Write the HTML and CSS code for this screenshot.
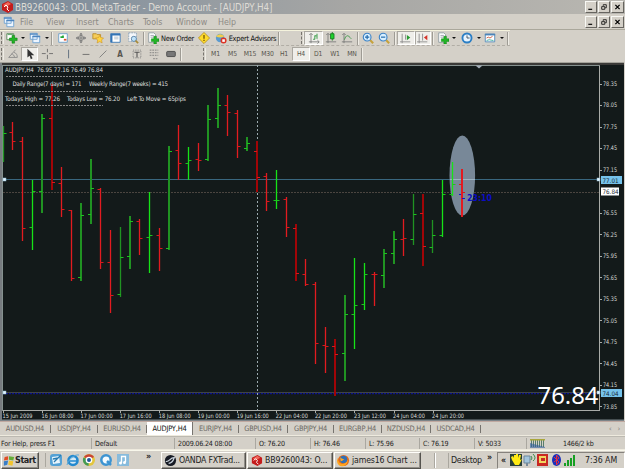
FILE: index.html
```html
<!DOCTYPE html>
<html lang="en">
<head>
<meta charset="utf-8">
<title>ODL MetaTrader</title>
<link rel="stylesheet" href="styles.css">
</head>
<body>
<svg class="defs" width="0" height="0">
  <symbol id="logo" viewBox="0 0 14 14"><path d="M2 4 8 1l5 3v6l-5 3-6-3z" fill="#c41c1c"/><path d="M3 5 8 2l3 2-5 3z" fill="#f0685c"/><path d="m4 7 2-2 2 2-1 2 2 2" stroke="#fff" fill="none"/></symbol>
  <symbol id="newchart" viewBox="0 0 14 14"><path d="M1 2h8v7H1z" fill="#fff" stroke="#518451"/><path d="M2 3h6" stroke="#4c9c58"/><path d="M7 4h3v3h3v3h-3v3H7v-3H4V7h3z" fill="#22b526" stroke="#08780d" stroke-width=".6"/></symbol>
  <symbol id="windows" viewBox="0 0 14 14"><path d="M1.500 1.500h8v7h-8zM4.500 4.500h8v8h-8z" fill="#edf5ff" stroke="#6b9fd0"/><path d="M1 2.500h9M4 5.500h9" stroke="#4b83be" stroke-width="1.500"/></symbol>
  <symbol id="market" viewBox="0 0 14 14"><path d="M2 2h10v10H2z" fill="#fff" stroke="#669bc8"/><path d="M4 6h3v-2" stroke="#1fa535" stroke-width="2" fill="none"/><path d="M8 9h3" stroke="#df522c" stroke-width="2"/></symbol>
  <symbol id="cross" viewBox="0 0 14 14"><circle cx="7" cy="7" r="3" fill="none" stroke="#777"/><path d="M7 2v10M2 7h10" stroke="#777"/><path d="m7 1 2 2H5zm0 12 2-2H5zM1 7l2-2v4zm12 0-2-2v4z" fill="#777"/></symbol>
  <symbol id="star" viewBox="0 0 14 14"><path d="M1 2h4l1 1h4v5H1z" fill="#f6cd58" stroke="#b98a28"/><path d="m9 4 1.300 2.500 3.200.5-2.300 2.300.6 3.500L9 11.200l-3 1.600.6-3.500L4.300 7l3.300-.5z" fill="#ffd443" stroke="#c88b18" stroke-width=".6"/></symbol>
  <symbol id="terminal" viewBox="0 0 14 14"><path d="M2 2h11v10H2z" fill="#fff" stroke="#3274b5"/><path d="M3 2v10M2 3h11" stroke="#3274b5" stroke-width="2"/><path d="M6 6h5M6 8h5" stroke="#a6b8c4"/></symbol>
  <symbol id="tester" viewBox="0 0 14 14"><path d="M2 1h9v10H2z" fill="#f4f7fb" stroke="#8aa3b9" stroke-dasharray="2 1"/><circle cx="8" cy="8" r="3" fill="#bfe2fa" stroke="#547da2"/><path d="m10 10 3 3" stroke="#a88a38" stroke-width="2"/></symbol>
  <symbol id="order" viewBox="0 0 14 14"><path d="M2 1h6l2 2v9H2z" fill="#fff" stroke="#8b989e"/><path d="M4 4h4M4 6h4" stroke="#99a"/><path d="M8 5h3v3h3v3h-3v3H8v-3H5V8h3z" fill="#22b526" stroke="#08780d" stroke-width=".5"/></symbol>
  <symbol id="warn" viewBox="0 0 14 14"><path d="m7 .5 6.500 6.500L7 13.500.5 7z" fill="#ffdb2a" stroke="#b79121"/><path d="M7 3.500v4.500M7 9v1.500" stroke="#725500" stroke-width="1.500"/></symbol>
  <symbol id="expert" viewBox="0 0 14 14"><circle cx="6" cy="7" r="5" fill="#5b9bd0"/><path d="M1 5q5-5 10 0-5 3-10 0" fill="#f3cf4b"/><circle cx="10" cy="10" r="3.500" fill="#dc3324"/><path d="M8.500 8.500h3v3h-3z" fill="#fff"/></symbol>
  <symbol id="bars" viewBox="0 0 14 14"><path d="M3.500 2v11M1 11.500h12M1.500 3.500l2-2 2 2M11 9.500l2 2-2 2" stroke="#777" fill="none"/><path d="M6 8.500h2V4M8 4.500h2M10.500 2v6" stroke="#1d8f2d" fill="none"/></symbol>
  <symbol id="candle" viewBox="0 0 14 14"><path d="M3.500 2v11M1 11.500h12M1.500 3.500l2-2 2 2" stroke="#777" fill="none"/><path d="M8.500 0v10" stroke="#16791e"/><path d="M6.500 2h4v6h-4z" fill="#1fd42d" stroke="#16791e"/></symbol>
  <symbol id="line" viewBox="0 0 14 14"><path d="M3.500 2v11M1 11.500h12M1.500 3.500l2-2 2 2" stroke="#777" fill="none"/><path d="M4 9c2-6 4-6 8-1" stroke="#3c9646" fill="none"/></symbol>
  <symbol id="zin" viewBox="0 0 14 14"><path d="m8 8 5 5" stroke="#c6a23c" stroke-width="2.500"/><circle cx="6" cy="6" r="4.500" fill="#d8efff" stroke="#3c83c7" stroke-width="1.300"/><path d="M3.500 6h5M6 3.500v5" stroke="#246cad" stroke-width="1.400"/></symbol>
  <symbol id="zout" viewBox="0 0 14 14"><path d="m8 8 5 5" stroke="#c6a23c" stroke-width="2.500"/><circle cx="6" cy="6" r="4.500" fill="#d8efff" stroke="#3c83c7" stroke-width="1.300"/><path d="M3.500 6h5" stroke="#246cad" stroke-width="1.400"/></symbol>
  <symbol id="scroll" viewBox="0 0 14 14"><path d="M2.500 2v11M0 11.500h12M6.500 3v6" stroke="#888"/><path d="m8 3.500 4 3-4 3z" fill="#279b31"/></symbol>
  <symbol id="shift" viewBox="0 0 14 14"><path d="M2.500 2v11M0 11.500h12M6.500 2v8" stroke="#888"/><path d="m12 3.500-4 3 4 3z" fill="#d53328"/></symbol>
  <symbol id="clock" viewBox="0 0 14 14"><circle cx="7" cy="7" r="5.300" fill="#e7f4ff" stroke="#2c7fc5" stroke-width="2.200"/><path d="M7 4v3h3" stroke="#345" fill="none"/></symbol>
  <symbol id="template" viewBox="0 0 14 14"><path d="M1.500 2.500h11v9h-11z" fill="#fff" stroke="#4b84b8"/><path d="M1 3h12" stroke="#4b84b8" stroke-width="2"/><path d="m3 7 2-1 2 1 3-2" stroke="#c75232" fill="none"/><path d="m3 10 3-1 5 1" stroke="#3a9" fill="none"/></symbol>
  <symbol id="angle" viewBox="0 0 14 14"><path d="M2 11 10 2M2 11h10M5 7c3 0 3 2 4 4M8 5c3 1 4 3 4 6" stroke="#888" fill="none"/></symbol>
  <symbol id="pointer" viewBox="0 0 14 14"><path d="M4 1v10l2.500-2L8 13l2-1-1.700-3.500H12z" fill="#333"/></symbol>
  <symbol id="hair" viewBox="0 0 14 14"><path d="M7.500 1v4m0 3v5M1 6.500h4.500m4 0H14" stroke="#666"/></symbol>
  <symbol id="vline" viewBox="0 0 14 14"><path d="M6.500 2v10" stroke="#567"/></symbol>
  <symbol id="hline" viewBox="0 0 14 14"><path d="M3 7.500h8" stroke="#666"/></symbol>
  <symbol id="trend" viewBox="0 0 14 14"><path d="M3 11 11 3" stroke="#777"/></symbol>
  <symbol id="label" viewBox="0 0 14 14"><path d="M2.500 2.500h9v9h-9z" fill="none" stroke="#777" stroke-dasharray="1 1"/><path d="M4 5h6M7 5v6" stroke="#555" stroke-width="1.300"/></symbol>
  <symbol id="fibo" viewBox="0 0 14 14"><path d="M2 2.500h10M2 5.500h10M2 8.500h10M6 12.500h6" stroke="#777" stroke-dasharray="2 1"/></symbol>
  <symbol id="shape" viewBox="0 0 14 14"><rect x="2" y="4" width="10" height="6" rx="1" fill="#777" stroke="#444"/></symbol>
  <symbol id="ie" viewBox="0 0 14 14"><circle cx="7" cy="7.500" r="4.500" fill="#d4e9f6" stroke="#2389cf" stroke-width="2.600"/><path d="M4 8h7" stroke="#2389cf" stroke-width="1.500"/><path d="M1 12C2 7 8 1 13 2" fill="none" stroke="#5aa9da"/></symbol>
  <symbol id="desktop" viewBox="0 0 14 14"><rect x="1" y="1" width="12" height="12" rx="3" fill="#54a1d5"/><path d="m3 4 7-1 1 7-7 1z" fill="#e9f5fc"/><path d="m5 9 7-7M4 6l5-1" stroke="#287cb2" stroke-width="1.300"/></symbol>
  <symbol id="chrome" viewBox="0 0 14 14"><circle cx="7" cy="7" r="6" fill="#e3c63d"/><path d="M2 4a6 6 0 0 1 10 0L7 7z" fill="#c94436"/><path d="M1.500 4.500a6 6 0 0 0 5 8.500L7 7z" fill="#429956"/><circle cx="7" cy="7" r="3.300" fill="#fff"/><circle cx="7" cy="7" r="2" fill="#24579b"/></symbol>
  <symbol id="quick" viewBox="0 0 14 14"><circle cx="7" cy="7" r="4.700" fill="#f4fbff" stroke="#3d94d2" stroke-width="2.500"/><path d="m8 8 4 4" stroke="#3d94d2" stroke-width="2.500"/></symbol>
  <symbol id="music" viewBox="0 0 14 14"><rect x="1" y="1" width="12" height="12" fill="#87bbdc"/><path d="M5.500 10V3.500h4V9" stroke="#fff" stroke-width="1.300" fill="none"/><circle cx="4.500" cy="10" r="1.500" fill="#fff"/><circle cx="8.500" cy="9.500" r="1.500" fill="#fff"/></symbol>
  <symbol id="firefox" viewBox="0 0 14 14"><circle cx="7" cy="7" r="6" fill="#e76c18"/><circle cx="7" cy="6" r="4" fill="#326fb5"/><path d="M1 4c0 8 8 9 11 2-1 10-12 9-12 1zM3 2c0 3 3 3 5 4l-4 2z" fill="#ffa51f"/></symbol>
  <symbol id="oanda" viewBox="0 0 14 14"><circle cx="7" cy="7" r="6" fill="#171b24"/><path d="M2 8c4 1 4-4 9-4-1 3-3 6-6 6" stroke="#ccd5df" stroke-width="1.300" fill="none"/></symbol>
</svg>

<div class="app">
  <header class="title"><svg class="ico"><use href="#logo"/></svg><span class="title-text">BB9260043: ODL MetaTrader - Demo Account - [AUDJPY,H4]</span>
    <span class="controls"><svg viewBox="0 0 13 11"><path d="M3 8.500h5" stroke="#000" stroke-width="1.500"/></svg><svg viewBox="0 0 13 11"><path d="M5.500 4V2.500h4v4H8M3.500 5h4v3.500h-4z" fill="none" stroke="#000"/></svg><svg viewBox="0 0 13 11"><path d="m4 3 5 5m0-5L4 8" stroke="#000" stroke-width="1.500"/></svg></span>
  </header>
  <nav class="menu"><svg class="ico"><use href="#windows"/></svg><span>File</span><span>View</span><span>Insert</span><span>Charts</span><span>Tools</span><span>Window</span><span>Help</span>
    <span class="controls"><svg viewBox="0 0 13 11"><path d="M3 8.500h5" stroke="#000" stroke-width="1.500"/></svg><svg viewBox="0 0 13 11"><path d="M5.500 4V2.500h4v4H8M3.500 5h4v3.500h-4z" fill="none" stroke="#000"/></svg><svg viewBox="0 0 13 11"><path d="m4 3 5 5m0-5L4 8" stroke="#000" stroke-width="1.500"/></svg></span>
  </nav>
  <div class="tools main-tools">
    <i class="grip"></i><svg class="ico"><use href="#newchart"/></svg><b class="arrow"></b><svg class="ico"><use href="#windows"/></svg><b class="arrow"></b><i class="sep"></i>
    <svg class="ico"><use href="#market"/></svg><svg class="ico"><use href="#cross"/></svg><svg class="ico"><use href="#star"/></svg><svg class="ico"><use href="#terminal"/></svg><svg class="ico"><use href="#tester"/></svg><i class="sep"></i>
    <svg class="ico"><use href="#order"/></svg><span class="order">New Order</span><svg class="ico"><use href="#warn"/></svg><svg class="ico"><use href="#expert"/></svg><span class="expert">Expert Advisors</span><i class="sep"></i><i></i><i class="grip"></i>
    <span class="pressed"><svg class="ico"><use href="#bars"/></svg></span><svg class="ico"><use href="#candle"/></svg><svg class="ico"><use href="#line"/></svg><i class="sep"></i><svg class="ico"><use href="#zin"/></svg><svg class="ico"><use href="#zout"/></svg><i class="sep"></i>
    <span class="pressed"><svg class="ico"><use href="#scroll"/></svg></span><span class="pressed"><svg class="ico"><use href="#shift"/></svg></span><i class="sep"></i><svg class="ico"><use href="#order"/></svg><b class="arrow"></b><svg class="ico"><use href="#clock"/></svg><b class="arrow"></b><svg class="ico"><use href="#template"/></svg><b class="arrow"></b><i class="sep"></i>
  </div>
  <div class="tools draw-tools">
    <i class="grip"></i><svg class="ico"><use href="#angle"/></svg><span class="pressed"><svg class="ico"><use href="#pointer"/></svg></span><svg class="ico"><use href="#hair"/></svg><i></i><svg class="ico"><use href="#vline"/></svg><svg class="ico"><use href="#hline"/></svg><svg class="ico"><use href="#trend"/></svg><span class="letter">A</span><svg class="ico"><use href="#label"/></svg><svg class="ico"><use href="#fibo"/></svg><svg class="ico"><use href="#shape"/></svg><i class="sep"></i><i></i><i class="grip"></i>
    <span>M1</span><span>M5</span><span>M15</span><span>M30</span><span>H1</span><span class="pressed">H4</span><span>D1</span><span>W1</span><span>MN</span><i class="sep"></i>
  </div>

  <main class="chart">
    <svg id="chart" width="625" height="359" viewBox="0 62 625 359">
      <path d="M0 62.500H624" stroke="#a5a39b"/>
      <path d="M0 64H624" stroke="#3b3a38" stroke-width="2"/>
      <path d="M1 63v357" stroke="#777c80" stroke-width="2"/>
      <path d="M0 420.500H625" stroke="#7b8388" stroke-width="2"/>
      <path d="M624.500 62v359" stroke="#d4d0c8"/>
      <path d="M2.500 410.500H600M599.500 65v346" stroke="#a9aca8" fill="none"/>
      <path d="M2.500 65.500H600M2.500 65v346" stroke="#85918f" fill="none"/>
      <path d="M3 192.500H599" stroke="#4b4540" stroke-dasharray="2 1"/>
      <path d="M3 179.500H600" stroke="#39677f"/>
      <path d="M3 392.500H600" stroke="#3f4446"/>
      <path d="M3 393.700H600" stroke="#0c14a8" stroke-dasharray="2 1"/>
      <path d="M257.500 65V411" stroke="#9baaaf" stroke-dasharray="2 2"/>
      <ellipse cx="462.300" cy="175.500" rx="12.800" ry="40" fill="#788898"/>
      <path d="M450 179.500h25" stroke="#9db4c3"/>
      <g id="ohlc" fill="none"></g>
      <path d="m475.500 65.500h7l-3.500 3z" fill="#a5afba"/>
      <g class="marker"><rect x="3" y="178" width="3" height="3"/><rect x="597" y="178" width="3" height="3"/><rect x="3" y="391" width="3" height="3"/><rect x="597" y="391" width="3" height="3"/></g>
      <g class="note">
        <text x="5" y="72" textLength="98">AUDJPY,H4  76.95 77.16 76.49 76.84</text>
        <text x="12.500" y="86" textLength="69">Daily Range(7 days) = 171</text><text x="89" y="86" textLength="79">Weekly Range(7 weeks) = 415</text>
        <text x="5" y="100.500" textLength="55">Todays High = 77.26</text><text x="67" y="100.500" textLength="53">Todays Low = 76.20</text><text x="127" y="100.500" textLength="59">Left To Move = 65pips</text>
        <path d="M6 76.500h97M6 91.500h97M6 105.500h97" stroke="#858585" stroke-dasharray="2 1"/>
      </g>
      <text class="countdown" x="467" y="201.300" textLength="25" lengthAdjust="spacingAndGlyphs">23:10</text>
      <path d="M459 194.500h2M462 198.500h3" stroke="#1414d0"/>
      <text class="quote" x="537.500" y="404.300" textLength="61" lengthAdjust="spacingAndGlyphs">76.84</text>
      <g id="axes"></g>
    </svg>
  </main>

  <nav class="tabs"><span>AUDUSD,H4</span><span>USDJPY,H4</span><span>EURUSD,H4</span><span class="active">AUDJPY,H4</span><span>EURJPY,H4</span><span>GBPUSD,H4</span><span>GBPJPY,H4</span><span>EURGBP,H4</span><span>NZDUSD,H4</span><span>USDCAD,H4</span><span class="pager"><b>‹</b><b>›</b></span></nav>
  <div class="status"><span>For Help, press F1</span><span>Default</span><span>2009.06.24 08:00</span><span>O: 76.20</span><span>H: 76.46</span><span>L: 75.96</span><span>C: 76.19</span><span>V: 5033</span><span class="link"><svg width="15" height="9"><path d="M1.500 0v8m2-8v8m2-8v8m2-8v8m2-8v8m2-8v8m2-8v8" stroke="#587d6c"/><path d="M0 4 15 8V9H0z" fill="#315f9f" opacity=".6"/><path d="M0 .5h15" stroke="#a9a63a" stroke-width="2"/></svg></span><span>1466/2 kb</span></div>
  <footer class="taskbar">
    <button class="start"><svg width="12" height="13" viewBox="0 0 14 14"><path d="m2 3 4-1v4L1 7z" fill="#e14e25"/><path d="m7 2 6 1-1 4-5-1z" fill="#64ad36"/><path d="m1 8 5-1-1 5-4 1z" fill="#397ec5"/><path d="m7 7 5 1-1 5-5-1z" fill="#f3c52d"/></svg>Start</button>
    <div class="quick"><svg class="ico"><use href="#desktop"/></svg><svg class="ico"><use href="#ie"/></svg><svg class="ico"><use href="#chrome"/></svg><svg class="ico"><use href="#quick"/></svg><svg class="ico"><use href="#music"/></svg></div>
    <b class="more">»</b>
    <button class="task"><svg class="ico"><use href="#oanda"/></svg><span class="t1">OANDA FXTrad...</span></button>
    <button class="task"><svg class="ico"><use href="#logo"/></svg><span class="t2">BB9260043: O...</span></button>
    <button class="task"><svg class="ico"><use href="#firefox"/></svg><span class="t3">james16 Chart ...</span></button>
    <i class="band"></i>
    <span class="desk">Desktop <b>»</b></span>
    <div class="tray"><b>«</b>
      <svg width="67" height="14" viewBox="0 0 67 14"><path d="M0 1h12v12H0z" fill="#273f38"/><path d="M2 7 1 4l2-1 1 2V2h2v3-4h2v4l1-3h2L10 7l2-1-3 6H5z" fill="#ffea13"/><path d="M14 3h6v7h-6z" fill="#a2c5dd" stroke="#6a879b"/><path d="M17 10v3" stroke="#789" stroke-width="2"/><path d="M21 3q2 2 0 4m2-6q4 4 0 7" fill="none" stroke="#3c8c48"/><path d="M27 1h11v12H27z" fill="#c92823"/><path d="M29 3h7v7h-7z" fill="#f1d65e"/><path d="M31 5h4v3h-4z" fill="#c92823"/><ellipse cx="46.500" cy="7" rx="4.500" ry="6" fill="#1730bd"/><path d="m44 4 5 5-2.500 3V2L49 5l-5 4" stroke="#e53142" fill="none"/><path d="M55 13v-3m3 3V7m3 6V5m3 8V2" stroke="#16a023" stroke-width="2"/></svg>
      <span>7:36 AM</span></div>
  </footer>
</div>
<script src="script.js"></script>
</body>
</html>
```
FILE: styles.css
```css
* { box-sizing: border-box; }
body { margin: 0; width: 625px; height: 469px; overflow: hidden; background: #d4d0c8; font-family: "DejaVu Sans Condensed", "DejaVu Sans", sans-serif; font-size: 7px; color: #222; }
.defs { position: absolute; }
.app { display: grid; grid-template-rows: 14px 16px 16px 16px 359px 15px 14px 19px; width: 625px; height: 469px; }
.ico { width: 12px; height: 12px; display: block; flex: none; }
.title { display: flex; align-items: center; background: linear-gradient(90deg, #778899, #929aa1 28%, #a6a6a4 55%, #b9b7b1); color: #dedbd5; font-size: 9.800px; }
.title .ico { width: 14px; height: 14px; margin-right: 1px; }
.title-text { white-space: nowrap; letter-spacing: -.13px; }
.controls { display: grid; grid-template-columns: repeat(2, 12px) 13px; column-gap: 1px; margin: 0 1px 0 auto; }
.controls svg { width: 100%; height: 12px; background: #d4d0c8; border: 1px solid; border-color: #f8f8f4 #66645f #66645f #f8f8f4; }
.menu { display: grid; grid-template-columns: 20px 26px 30px 32px 35px 33px 42px 30px 1fr; align-items: center; border-bottom: 1px solid #aaa79b; color: #8d8a85; font-size: 8.800px; }
.menu .ico { margin-left: 3px; }
.tools { display: grid; align-items: center; justify-items: center; border-bottom: 1px dashed #b1ada5; white-space: nowrap; color: #59564f; }
.main-tools { grid-template-columns: 5px 14px 8px 16px 7px 4px 18px 18px 16px 18px 17px 5px 14px 35px 18px 15px 49px 4px 19px 4px 19px 15px 18px 4px 15px 18px 4px 18px 16px 4px 15px 8px 18px 6px 16px 7px 5px; width: 510px; border-top: 1px solid #f5f3dd; }
.draw-tools { grid-template-columns: 5px 16px 17px 18px 4px 18px 16px 18px 16px 18px 16px 17px 4px 19px 5px 17px 17px 18px 17px 16px 18px 16px 18px 16px 4px; font-size: 6.800px; letter-spacing: -.2px; border-bottom: 0; width: 364px; }
.order, .expert { color: #111; font-size: 7.400px; letter-spacing: -.3px; }
.letter { font-weight: bold; font-size: 8px; }
.grip { width: 3px; height: 12px; border-left: 1px dashed #77746e; border-right: 1px solid #eeece5; }
.sep { width: 2px; height: 13px; border-left: 1px solid #9e9b94; border-right: 1px solid #efede6; }
.arrow { width: 0; height: 0; border: 2px solid transparent; border-top-color: #111; border-bottom: 0; }
.pressed { width: 100%; height: 14px; display: flex; align-items: center; justify-content: center; background: #efeeea; border: 1px solid; border-color: #aaa7a0 #fff #fff #aaa7a0; }
.chart { background: #131a1a; }
.chart svg { display: block; }
.chart text { white-space: pre; }
.note, .axis { fill: #dcdedc; font-size: 6.200px; }
.axis.time { font-size: 6px; }
.axis.boxed { fill: #182b35; }
.countdown { fill: #0c0cc4; font-size: 9px; font-weight: bold; }
.quote { fill: #fff; font-family: "Noto Sans", sans-serif; font-size: 24px; }
.marker { fill: #e5f6ff; stroke: #8db9d0; stroke-width: .5; }
.tabs { display: grid; grid-template-columns: 51px 47px 49px 46px 46px 49px 46px 48px 49px 50px 1fr; align-items: center; border-top: 1px solid #c0a9a1; border-bottom: 1px solid #eeeade; font-size: 7.400px; color: #6b6862; letter-spacing: -.2px; }
.tabs > span { height: 8px; display: flex; align-items: center; justify-content: center; border-right: 1px solid #77746f; white-space: nowrap; }
.tabs > .active { height: 13px; background: #fff; color: #111; }
.tabs > .pager { border: 0; justify-content: flex-end; gap: 6px; padding-right: 5px; color: #99968f; }
.status { display: grid; grid-template-columns: 92px 83px 81px 55px 55px 54px 55px 52px 36px 1fr; align-items: center; border-top: 1px solid #bcb9b1; border-bottom: 1px solid #eeeade; font-size: 7.100px; letter-spacing: -.18px; }
.status span { padding-left: 3px; height: 11px; display: flex; align-items: center; white-space: nowrap; border-right: 1px solid #aaa7a0; }
.status span:first-child { padding-left: 1px; }
.status span:nth-last-child(-n+2) { border: 0; }
.status span:last-child { padding-left: 0; }
.taskbar { display: grid; grid-template-columns: 39px 8px 95px 18px 86px 87px 88px 27px 49px 128px; align-items: center; border-top: 1px solid #f8f7eb; }
button { font-family: inherit; color: #222; background: #d4d0c8; border: 1px solid; border-color: #fffefa #55534e #55534e #fffefa; box-shadow: inset -1px -1px #918e88; }
.start { grid-column: 1; display: flex; align-items: center; margin-left: 1px; height: 17px; font-weight: bold; font-size: 9px; padding: 0 1px; letter-spacing: -.45px; }
.quick { grid-column: 3; display: grid; grid-template-columns: 17px 16px 17px 17px 17px; border-left: 1px solid #aaa79f; margin-left: -2px; padding-left: 3px; }
.quick .ico { width: 14px; height: 14px; }
.more { padding-left: 4px; align-self: start; font-size: 9px; }
.task { display: flex; align-items: center; gap: 2px; height: 17px; padding: 0 2px; margin-left: 1px; min-width: 0; font-size: 8.700px; white-space: nowrap; }
.task .ico { width: 13px; height: 13px; }
.t1 { letter-spacing: -.25px; }
.t2 { letter-spacing: -.1px; }
.t3 { letter-spacing: -.15px; }
.band { justify-self: center; width: 2px; height: 15px; border-left: 1px solid #aaa79f; border-right: 1px solid #fff; }
.desk { display: flex; align-items: center; gap: 5px; height: 15px; font-size: 8.800px; white-space: nowrap; border-left: 1px solid #aaa79f; padding-left: 2px; letter-spacing: -.25px; }
.desk b { align-self: flex-start; line-height: 8px; }
.tray { display: flex; align-items: center; height: 17px; border: 1px solid; border-color: #85827c #fff #fff #85827c; padding-left: 3px; font-size: 8.700px; white-space: nowrap; }
.tray svg { margin: 0 8px 0 4px; }
```
FILE: script.js
```js
const NS = 'http://www.w3.org/2000/svg';
const colors = { g: '#209322', b: '#16e317', r: '#e21b20', d: '#a10507' };

// x, high, low, open, close, tone (coordinates on the chart canvas)
const bars = [
  [3.5,126,162,null,133,'g'],[12.5,122,150,132,141,'r'],[22.5,137,241,141,228,'r'],[32.5,180,250,227,191,'b'],
  [42,114,213,191,118,'g'],[52,84,190,118,182,'d'],[61.5,167,217,183,209,'r'],[71.5,210,281,210,278,'r'],
  [81,203,281,277,215,'g'],[91,159,224,214,188,'g'],[100.5,188,269,189,262,'r'],[110.5,230,313,262,295,'r'],
  [120.5,227,297,294,257,'g'],[130,216,269,256,221,'g'],[139.5,219,255,221,238,'r'],[149.5,192,273,237,235,'b'],
  [159.5,228,271,235,248,'r'],[169,146,250,248,151,'g'],[178.5,125,180,150,163,'r'],[188.5,147,180,163,160,'b'],
  [198.5,143,171,159,160,'r'],[208,105,161,159,119,'g'],[218,88,128,118,105,'g'],[227.5,95,136,105,112,'r'],
  [237.5,110,158,113,146,'r'],[247,137,151,148,143,'g'],[257,141,192,151,177,'d'],[266.5,173,211,176,201,'r'],
  [276.5,170,209,200,200,'b'],[286.5,197,237,199,227,'r'],[296,224,281,228,273,'d'],[305.5,259,286,274,284,'r'],
  [315.5,282,364,284,343,'r'],[325.5,327,373,345,346,'r'],[335,339,396,346,354,'d'],[345,295,381,353,314,'g'],
  [354.5,258,349,314,305,'b'],[364.5,263,310,304,274,'b'],[374.5,272,306,274,274,'r'],[384,249,288,275,253,'g'],
  [394,231,264,253,239,'g'],[403.5,219,256,239,238,'r'],[413.5,194,245,239,214,'g'],[423,194,266,213,246,'d'],
  [432.5,220,253,247,235,'g'],[442.5,180,237,235,194,'b'],[452.5,162,196,194,184,'b'],[462,169,217,184,192,'r']
];

function add(parent, tag, attrs, text) {
  const node = document.createElementNS(NS, tag);
  for (const key in attrs) node.setAttribute(key, attrs[key]);
  if (text) node.textContent = text;
  parent.appendChild(node);
}

const ohlc = document.getElementById('ohlc');
bars.forEach(([x, high, low, open, close, tone]) => {
  const wide = Number.isInteger(x);
  add(ohlc, 'path', { d: `M${x} ${high}V${low}`, stroke: colors[tone], 'stroke-width': wide ? 2 : 1.3 });
  const left = open === null ? '' : `M${x - 3} ${open + .5}H${x}`;
  add(ohlc, 'path', { d: `${left}M${x} ${close + .5}h3`, stroke: 'gb'.includes(tone) ? '#1cc41e' : '#d9181c' });
});

const axes = document.getElementById('axes');
for (let i = 0; i < 16; i++) {
  if (i === 5) continue;
  const y = 83.5 + i * 21.53;
  add(axes, 'path', { d: `M600 ${Math.round(y) + .5}h2`, stroke: '#a9aca8' });
  add(axes, 'text', { x: 603, y: y + 2.3, class: 'axis', textLength: 14, lengthAdjust: 'spacingAndGlyphs' }, (78.35 - i * .3).toFixed(2));
}
[[180, '77.01', '#75c2ea', 21], [191.5, '76.84', '#ffffff', 18], [393, '74.04', '#75c2ea', 21]].forEach(([y, label, fill, width]) => {
  add(axes, 'rect', { x: 601, y: y - 4, width, height: 8, fill });
  add(axes, 'text', { x: 602.5, y: y + 2.5, class: 'axis boxed', textLength: 16, lengthAdjust: 'spacingAndGlyphs' }, label);
});
['15 Jun 2009', '16 Jun 08:00', '17 Jun 00:00', '17 Jun 16:00', '18 Jun 08:00', '19 Jun 00:00', '19 Jun 16:00', '22 Jun 04:00', '22 Jun 20:00', '23 Jun 12:00', '24 Jun 04:00', '24 Jun 20:00'].forEach((label, i) => {
  const x = 3 + i * 39.05;
  add(axes, 'path', { d: `M${Math.round(x) + .5} 411v2`, stroke: '#a9aca8' });
  add(axes, 'text', { x: x - .5, y: 418.3, class: 'axis time', textLength: i ? 32 : 30, lengthAdjust: 'spacingAndGlyphs' }, label);
});
```
